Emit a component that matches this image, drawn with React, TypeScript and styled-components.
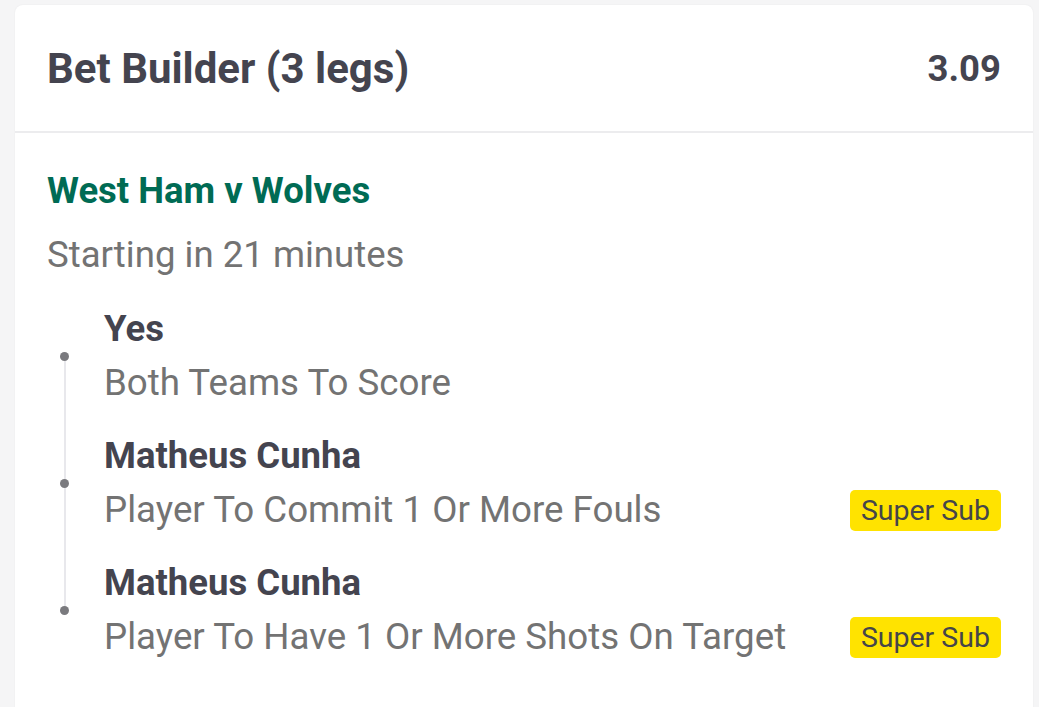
import styled, { createGlobalStyle } from "styled-components";

const GlobalStyle = createGlobalStyle`
  html, body {
    margin: 0;
    padding: 0;
    background: #f5f5f6;
    font-family: Roboto, "Liberation Sans", sans-serif;
  }
`;

const Page = styled.div`
  padding: 5px 6px 0 15px;
  height: 707px;
  box-sizing: border-box;
  overflow: hidden;
`;

const Card = styled.div`
  background: #ffffff;
  border-radius: 8px;
  box-shadow: 0 0 2px rgba(0, 0, 0, 0.06);
  min-height: 720px;
`;

const Header = styled.div`
  display: flex;
  align-items: center;
  justify-content: space-between;
  height: 126px;
  padding: 0 32px;
  border-bottom: 2px solid #ececee;
`;

const Title = styled.div`
  font-size: 42px;
  font-weight: 700;
  color: #44444f;
`;

const Odds = styled.div`
  font-size: 36.5px;
  font-weight: 700;
  color: #44444f;
`;

const Body = styled.div`
  padding: 36px 32px 0 32px;
`;

const Match = styled.div`
  font-size: 36.5px;
  font-weight: 700;
  color: #006b54;
  line-height: 44px;
`;

const Start = styled.div`
  font-size: 36.6px;
  color: #737373;
  line-height: 44px;
  margin-top: 20px;
`;

const Legs = styled.div`
  position: relative;
  margin-top: 28px;
  padding-left: 57px;
`;

const Rail = styled.div`
  position: absolute;
  left: 17px;
  top: 51px;
  bottom: 51px;
  width: 2px;
  background: #e8e8ec;
`;

const Leg = styled.div`
  position: relative;
  padding: 2px 0;
  & + & {
    margin-top: 25px;
  }
`;

const Dot = styled.span`
  position: absolute;
  left: -44px;
  top: 47px;
  width: 9px;
  height: 9px;
  border-radius: 50%;
  background: #7a7a7e;
`;

const Selection = styled.div`
  font-size: 36.5px;
  font-weight: 700;
  color: #44444f;
  line-height: 44px;
`;

const MarketRow = styled.div`
  display: flex;
  align-items: center;
  justify-content: space-between;
  margin-top: 10px;
`;

const Market = styled.div`
  font-size: 36.7px;
  color: #737373;
  line-height: 44px;
`;

const Badge = styled.span`
  background: #ffe300;
  color: #45454a;
  font-size: 28.5px;
  line-height: 41px;
  padding: 0 11px;
  border-radius: 5px;
`;

const legs = [
  { selection: "Yes", market: "Both Teams To Score", superSub: false },
  { selection: "Matheus Cunha", market: "Player To Commit 1 Or More Fouls", superSub: true },
  { selection: "Matheus Cunha", market: "Player To Have 1 Or More Shots On Target", superSub: true },
];

const App = () => {
  return (
    <Page>
      <GlobalStyle />
      <Card>
        <Header>
          <Title>Bet Builder (3 legs)</Title>
          <Odds>3.09</Odds>
        </Header>
        <Body>
          <Match>West Ham v Wolves</Match>
          <Start>Starting in 21 minutes</Start>
          <Legs>
            <Rail />
            {legs.map((leg, i) => (
              <Leg key={i}>
                <Dot />
                <Selection>{leg.selection}</Selection>
                <MarketRow>
                  <Market>{leg.market}</Market>
                  {leg.superSub && <Badge>Super Sub</Badge>}
                </MarketRow>
              </Leg>
            ))}
          </Legs>
        </Body>
      </Card>
    </Page>
  );
};

export default App;
